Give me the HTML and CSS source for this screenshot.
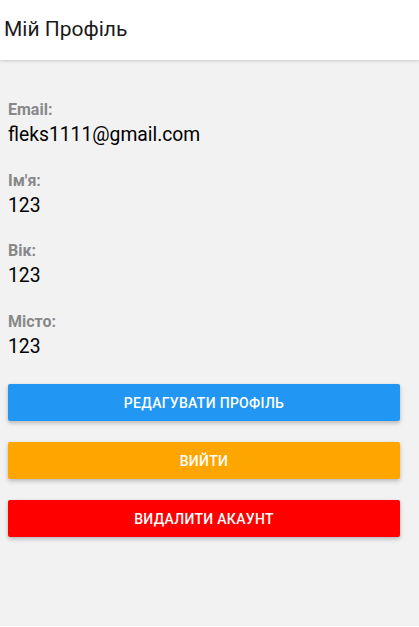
FILE: index.html
```html
<!DOCTYPE html>
<html lang="uk">
<head>
<meta charset="utf-8">
<title>Мій Профіль</title>
<link rel="stylesheet" href="styles.css">
</head>
<body>
<div class="app">
  <header class="topbar">
    <h1 class="title">Мій Профіль</h1>
  </header>
  <main class="content">
    <div class="field">
      <div class="label">Email:</div>
      <div class="value">fleks1111@gmail.com</div>
    </div>
    <div class="field">
      <div class="label">Ім'я:</div>
      <div class="value">123</div>
    </div>
    <div class="field">
      <div class="label">Вік:</div>
      <div class="value">123</div>
    </div>
    <div class="field">
      <div class="label">Місто:</div>
      <div class="value">123</div>
    </div>
    <div class="actions">
      <button class="btn btn-edit">Редагувати профіль</button>
      <button class="btn btn-logout">Вийти</button>
      <button class="btn btn-delete">Видалити акаунт</button>
    </div>
  </main>
</div>
</body>
</html>
```
FILE: styles.css
```css
* { box-sizing: border-box; }
html, body {
  margin: 0;
  padding: 0;
  height: 100%;
  background: #ffffff;
  font-family: Roboto, "Noto Sans", Arial, sans-serif;
}
.app {
  display: flex;
  flex-direction: column;
  height: 626px;
  background: #f2f2f2;
}
.topbar {
  height: 60px;
  background: #ffffff;
  display: flex;
  align-items: center;
  padding-left: 4px;
  box-shadow: 0 1px 3px rgba(0, 0, 0, 0.18);
  position: relative;
  z-index: 1;
}
.title {
  margin: 0;
  font-size: 21px;
  font-weight: 400;
  color: #1a1a1a;
  line-height: 24px;
  margin-top: -2px;
}
.content {
  flex: 1;
  padding: 40px 19px 0 8px;
  display: flex;
  flex-direction: column;
}
.field {
  display: flex;
  flex-direction: column;
  margin-bottom: 23.5px;
}
.label {
  font-size: 16px;
  line-height: 20px;
  font-weight: 700;
  color: #888888;
}
.value {
  font-size: 19.3px;
  line-height: 24px;
  color: #000000;
  margin-top: 3px;
}
.actions {
  display: flex;
  flex-direction: column;
  gap: 21px;
  margin-top: 2px;
}
.btn {
  height: 37px;
  border: none;
  border-radius: 2px;
  color: #ffffff;
  font-family: Roboto, "Noto Sans", Arial, sans-serif;
  font-size: 14px;
  font-weight: 500;
  text-transform: uppercase;
  letter-spacing: 0.3px;
  box-shadow: 0 2px 4px rgba(0, 0, 0, 0.25);
  padding: 0;
}
.btn-edit { background: #2196f3; }
.btn-logout { background: #ffa500; }
.btn-delete { background: #ff0000; }
```
